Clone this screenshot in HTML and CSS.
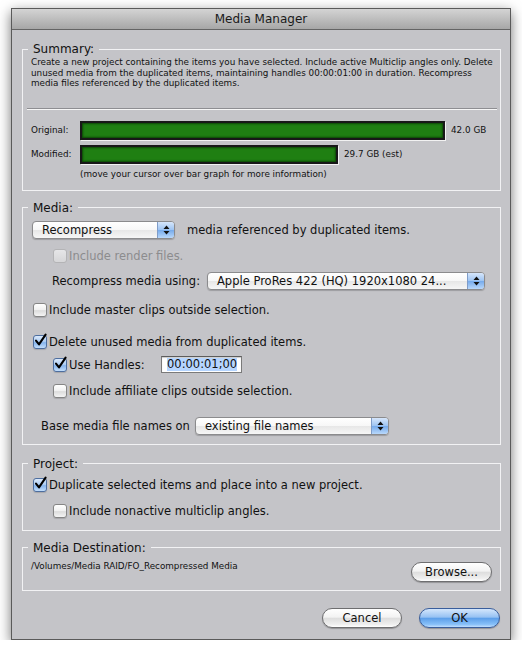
FILE: index.html
```html
<!DOCTYPE html>
<html>
<head>
<meta charset="utf-8">
<title>Media Manager</title>
<link rel="stylesheet" href="styles.css">
</head>
<body>
<div class="window">
  <div class="titlebar">Media Manager</div>
  <div class="content">
    <fieldset class="group summary">
      <legend>Summary:</legend>
      <p class="desc">Create a new project containing the items you have selected. Include active Multiclip angles only. Delete<br>unused media from the duplicated items, maintaining handles 00:00:01:00 in duration. Recompress<br>media files referenced by the duplicated items.</p>
      <div class="sep"></div>
      <div class="bars">
        <div class="bar-row"><span class="bar-label">Original:</span><span class="bar" style="width:365px"></span><span class="bar-value">42.0 GB</span></div>
        <div class="bar-row"><span class="bar-label">Modified:</span><span class="bar" style="width:258px"></span><span class="bar-value">29.7 GB (est)</span></div>
        <div class="bar-note">(move your cursor over bar graph for more information)</div>
      </div>
    </fieldset>

    <fieldset class="group media">
      <legend>Media:</legend>
      <div class="row r1">
        <div class="popup p-recompress"><span class="popup-text">Recompress</span><span class="popup-arrows"><svg width="7" height="10" viewBox="0 0 7 10"><path d="M3.5 0.5 L6.5 4 L0.5 4 Z M0.5 6 L6.5 6 L3.5 9.5 Z" fill="#111"/></svg></span></div>
        <span class="after-popup">media referenced by duplicated items.</span>
      </div>
      <div class="row r2 indent">
        <span class="cb disabled"></span><span class="dim">Include render files.</span>
      </div>
      <div class="row r3">
        <span class="lbl-using">Recompress media using:</span>
        <div class="popup p-codec"><span class="popup-text">Apple ProRes 422 (HQ) 1920x1080 24...</span><span class="popup-arrows"><svg width="7" height="10" viewBox="0 0 7 10"><path d="M3.5 0.5 L6.5 4 L0.5 4 Z M0.5 6 L6.5 6 L3.5 9.5 Z" fill="#111"/></svg></span></div>
      </div>
      <div class="row r4">
        <span class="cb"></span><span>Include master clips outside selection.</span>
      </div>
      <div class="row r5">
        <span class="cb checked"><svg class="tick" width="15" height="15" viewBox="0 0 15 15"><path d="M3 7.6 L6 11.4 L12.6 1.6" fill="none" stroke="#000" stroke-width="2.1" stroke-linecap="round" stroke-linejoin="round"/></svg></span><span>Delete unused media from duplicated items.</span>
      </div>
      <div class="row r6 indent">
        <span class="cb checked"><svg class="tick" width="15" height="15" viewBox="0 0 15 15"><path d="M3 7.6 L6 11.4 L12.6 1.6" fill="none" stroke="#000" stroke-width="2.1" stroke-linecap="round" stroke-linejoin="round"/></svg></span><span class="lbl-handles">Use Handles:</span>
        <span class="field"><span class="sel">00:00:01;00</span></span>
      </div>
      <div class="row r7 indent">
        <span class="cb"></span><span>Include affiliate clips outside selection.</span>
      </div>
      <div class="row r8">
        <span class="lbl-base">Base media file names on</span>
        <div class="popup p-names"><span class="popup-text">existing file names</span><span class="popup-arrows"><svg width="7" height="10" viewBox="0 0 7 10"><path d="M3.5 0.5 L6.5 4 L0.5 4 Z M0.5 6 L6.5 6 L3.5 9.5 Z" fill="#111"/></svg></span></div>
      </div>
    </fieldset>

    <fieldset class="group project">
      <legend>Project:</legend>
      <div class="row p1">
        <span class="cb checked"><svg class="tick" width="15" height="15" viewBox="0 0 15 15"><path d="M3 7.6 L6 11.4 L12.6 1.6" fill="none" stroke="#000" stroke-width="2.1" stroke-linecap="round" stroke-linejoin="round"/></svg></span><span>Duplicate selected items and place into a new project.</span>
      </div>
      <div class="row p2 indent">
        <span class="cb"></span><span>Include nonactive multiclip angles.</span>
      </div>
    </fieldset>

    <fieldset class="group dest">
      <legend>Media Destination:</legend>
      <div class="dest-row">
        <span class="path">/Volumes/Media RAID/FO_Recompressed Media</span>
        <button class="btn browse">Browse...</button>
      </div>
    </fieldset>

    <div class="footer">
      <button class="btn cancel">Cancel</button>
      <button class="btn ok">OK</button>
    </div>
  </div>
</div>
</body>
</html>
```

FILE: styles.css
```css
* { box-sizing: border-box; }

body {
  margin: 0;
  background: #ffffff;
  font-family: "DejaVu Sans", "Noto Sans", sans-serif;
  font-size: 11.5px;
  color: #111;
}

.window {
  margin: 8px 0 0 11px;
  width: 500px;
  border: 1px solid #5a5a5a;
  background: #c4c4c8;
  box-shadow: 0 4px 12px rgba(0, 0, 0, 0.55);
}

.titlebar {
  height: 21px;
  line-height: 20px;
  text-align: center;
  font-size: 12px;
  color: #1a1a1a;
  background: linear-gradient(#d4d4d4, #a7a7a7);
  border-bottom: 1px solid #656565;
}

.content {
  padding: 11px 9px 11px 10px;
}

.group {
  margin: 0;
  min-width: 0;
  border: 1px solid #f2f2f4;
  padding: 0 8px 10px 10px;
}

.group legend {
  font-size: 12px;
  line-height: 16px;
  padding: 0 5px;
  margin-left: -5px;
  color: #111;
}

/* Summary */
.summary { padding: 0 8px 10px 8px; }
.summary legend { margin-left: -3px; }

.small {
  font-size: 8.8px;
}

.desc {
  margin: 0;
  font-size: 8.8px;
  line-height: 10.5px;
  white-space: nowrap;
}

.sep {
  height: 2px;
  margin: 19px -5px 0 -4px;
  border-top: 1px solid #8e8e92;
  border-bottom: 1px solid #f6f6f6;
}

.bars { margin-top: 11px; }

.bar-row {
  display: flex;
  align-items: center;
  height: 19px;
  font-size: 8.8px;
}
.bar-row + .bar-row { margin-top: 5px; }

.bar-label { width: 49px; flex: none; }

.bar {
  height: 19px;
  flex: none;
  border: 2px solid #181818;
  background: #1f7f12;
  box-shadow: inset 0 0 2px 1px #0c4606, 1px 1px 0 #f2f2f2;
}

.bar-value { margin-left: 6px; }

.bar-note {
  margin: 4px 0 0 49px;
  font-size: 8.8px;
  line-height: 12px;
}

/* Media */
.media { margin-top: 9px; padding-bottom: 8px; }

.row {
  display: flex;
  align-items: center;
  height: 20px;
  white-space: nowrap;
}
.indent { margin-left: 20px; }

.r1 { margin-top: 4px; }
.r2 { margin-top: 6px; }
.r3 { margin-top: 5px; }
.r4 { margin-top: 9px; }
.r5 { margin-top: 12px; }
.r6 { margin-top: 3px; }
.r7 { margin-top: 6px; }
.r8 { margin-top: 15px; }

.cb {
  position: relative;
  flex: none;
  width: 14px;
  height: 14px;
  margin-right: 2px;
  border: 1px solid #858585;
  border-radius: 3px;
  background: linear-gradient(#ffffff, #f0f0f0 50%, #dcdcdc 55%, #f4f4f4);
  box-shadow: 0 1px 1px rgba(0, 0, 0, 0.15);
}
.cb.checked {
  border-color: #4d6e9f;
  background: linear-gradient(#dbe9fb, #a9cbf3 50%, #86b5ee 55%, #c2ddfa);
}
.cb.disabled {
  border-color: #b4b4b6;
  background: linear-gradient(#e6e6e8, #d6d6d8);
  box-shadow: none;
}
.tick {
  position: absolute;
  left: -1px;
  top: -3px;
}

.dim { color: #8c8c8e; }

.popup {
  display: flex;
  flex: none;
  height: 18px;
  border: 1px solid #8b8b8d;
  border-radius: 4px;
  background: linear-gradient(#ffffff, #f7f7f7 50%, #e7e7e7 52%, #f6f6f6);
  box-shadow: 0 1px 1px rgba(0, 0, 0, 0.2);
  overflow: hidden;
}
.popup-text {
  flex: 1;
  padding-left: 9px;
  line-height: 16px;
  white-space: nowrap;
  overflow: hidden;
}
.popup-arrows {
  flex: none;
  width: 17px;
  display: flex;
  align-items: center;
  justify-content: center;
  border-left: 1px solid #7f9cc8;
  background: linear-gradient(#d6e6fb, #9cc3f2 50%, #78acec 53%, #b9d8fb);
}

.p-recompress { width: 143px; margin-left: -1px; }
.after-popup { margin-left: 12px; }

.r3 { margin-left: 19px; }
.lbl-using { width: 155px; flex: none; }
.p-codec { width: 278px; }

.lbl-handles { width: 92px; flex: none; }
.field {
  display: flex;
  align-items: center;
  width: 81px;
  height: 17px;
  padding-left: 5px;
  border: 1px solid #7a7a7a;
  border-top-color: #5c5c5c;
  background: #ffffff;
  box-shadow: inset 0 1px 1px rgba(0, 0, 0, 0.2);
}
.sel { background: #b5d5ff; line-height: 13px; }

.r8 { margin-left: 8px; }
.lbl-base { width: 154px; flex: none; }
.p-names { width: 194px; }

/* Project */
.project { margin-top: 11px; padding-bottom: 9px; }
.p1 { margin-top: 3px; }
.p2 { margin-top: 6px; }

/* Destination */
.dest { margin-top: 9px; padding: 0 8px 8px 8px; }
.dest legend { margin-left: -3px; }

.dest-row {
  display: flex;
  justify-content: space-between;
  align-items: flex-start;
}
.path {
  margin-top: 4px;
  font-size: 8.8px;
  line-height: 12px;
}

.btn {
  height: 20px;
  padding: 0;
  border: 1px solid #6e6e70;
  border-radius: 10px;
  font-family: inherit;
  font-size: 11.5px;
  color: #111;
  background: linear-gradient(#ffffff, #f3f3f3 45%, #dedede 52%, #eeeeee 85%, #ffffff);
  box-shadow: 0 1px 1px rgba(0, 0, 0, 0.25);
}
.browse { width: 81px; margin-top: 6px; }

.footer {
  display: flex;
  justify-content: flex-end;
  gap: 17px;
  margin: 17px 1px 0 0;
}
.cancel { width: 80px; }
.ok {
  width: 81px;
  border-color: #3a5e9c;
  background: linear-gradient(#d4e6fc, #97c2f3 45%, #5d9fe9 52%, #86bff8 85%, #c0defe);
}
```
